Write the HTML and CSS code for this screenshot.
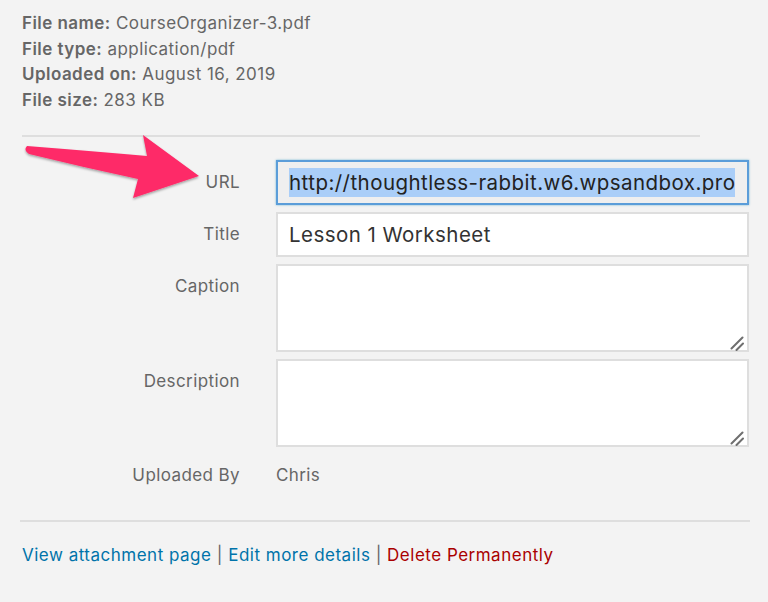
FILE: index.html
```html
<!DOCTYPE html>
<html lang="en">
<head>
<meta charset="utf-8">
<title>Attachment details</title>
<link rel="stylesheet" href="styles.css">
</head>
<body>
<div class="panel">
  <div class="meta">
    <div><strong>File name:</strong> CourseOrganizer-3.pdf</div>
    <div><strong>File type:</strong> application/pdf</div>
    <div><strong>Uploaded on:</strong> August 16, 2019</div>
    <div><strong>File size:</strong> 283 KB</div>
  </div>
  <hr class="sep sep-top">
  <div class="fields">
    <div class="label">URL</div>
    <div class="input url"><span class="sel">http://thoughtless-rabbit.w6.wpsandbox.pro</span></div>
    <div class="label">Title</div>
    <div class="input">Lesson 1 Worksheet</div>
    <div class="label">Caption</div>
    <div class="area-wrap">
      <textarea class="area"></textarea>
      <svg class="grip" width="14" height="16" viewBox="0 0 14 16" aria-hidden="true">
        <path d="M1.5,13.5 L12.5,2.5 M6.5,15 L13,8.5" stroke="#6f6f6f" stroke-width="2" stroke-linecap="round" fill="none"/>
      </svg>
    </div>
    <div class="label">Description</div>
    <div class="area-wrap">
      <textarea class="area"></textarea>
      <svg class="grip" width="14" height="16" viewBox="0 0 14 16" aria-hidden="true">
        <path d="M1.5,13.5 L12.5,2.5 M6.5,15 L13,8.5" stroke="#6f6f6f" stroke-width="2" stroke-linecap="round" fill="none"/>
      </svg>
    </div>
    <div class="label label-plain">Uploaded By</div>
    <div class="value">Chris</div>
  </div>
  <hr class="sep sep-bottom">
  <div class="actions">
    <a href="#" class="link">View attachment page</a> <span class="bar">|</span>
    <a href="#" class="link">Edit more details</a> <span class="bar">|</span>
    <a href="#" class="link delete">Delete Permanently</a>
  </div>
  <svg class="arrow" width="200" height="80" viewBox="0 0 200 80" aria-hidden="true">
    <defs>
      <filter id="sh" x="-10%" y="-10%" width="120%" height="130%">
        <feDropShadow dx="0" dy="1.5" stdDeviation="1.2" flood-color="#000" flood-opacity="0.35"/>
      </filter>
    </defs>
    <path filter="url(#sh)" fill="#fe2a68" d="M17,21 Q80,26 137,31 L133,10 L189,51 L123,73 L128,54 Q72,42 19,29 Q13,25 17,21 Z"/>
  </svg>
</div>
</body>
</html>
```

FILE: styles.css
```css
html, body {
  margin: 0;
  padding: 0;
  background: #f3f3f3;
}
body {
  font-family: Inter, "Liberation Sans", sans-serif;
  color: #666;
  width: 768px;
  height: 602px;
  overflow: hidden;
}
.panel {
  position: relative;
  padding: 11px 0 0 22px;
}
.meta {
  font-size: 17px;
  letter-spacing: 0.45px;
  line-height: 25.7px;
  color: #666;
}
.meta strong {
  font-weight: 600;
}
.sep {
  border: 0;
  height: 2px;
  background: #dedede;
  margin: 0;
}
.sep-top {
  width: 678px;
  margin-top: 21px;
}
.sep-bottom {
  width: 730px;
  margin-top: 34px;
  margin-left: -2px;
}
.fields {
  display: grid;
  grid-template-columns: 218px 473px;
  column-gap: 36px;
  row-gap: 7px;
  margin-top: 23px;
}
.label {
  text-align: right;
  font-size: 17px;
  letter-spacing: 0.4px;
  line-height: 22px;
  padding-top: 11px;
  color: #666;
}
.label-plain {
  padding-top: 10px;
}
.input {
  box-sizing: border-box;
  height: 45px;
  border: 2px solid #dedede;
  background: #fff;
  font-size: 20.5px;
  letter-spacing: 0.45px;
  line-height: 24px;
  padding: 9px 11px;
  color: #333;
  white-space: nowrap;
  overflow: hidden;
}
.url {
  background: #efefef;
  border-color: #5b9dd9;
  box-shadow: 0 0 2px rgba(30, 140, 190, 0.6);
}
.sel {
  background: #aacef8;
  color: #222;
  padding: 2px 0 2px;
}
.area-wrap {
  position: relative;
  height: 88px;
}
.area {
  box-sizing: border-box;
  display: block;
  height: 88px;
  width: 473px;
  border: 2px solid #dedede;
  background: #fff;
  margin: 0;
  padding: 8px 11px;
  font-family: inherit;
  font-size: 20px;
  resize: none;
  outline: none;
}
.grip {
  position: absolute;
  right: 5px;
  bottom: 1px;
}
.value {
  font-size: 17px;
  letter-spacing: 0.4px;
  line-height: 22px;
  padding-top: 10px;
  color: #666;
}
.actions {
  margin-top: 22px;
  font-size: 17px;
  letter-spacing: 0.5px;
  line-height: 22px;
}
.link {
  color: #0073aa;
  text-decoration: none;
}
.delete {
  color: #a00;
}
.bar {
  color: #666;
}
.arrow {
  position: absolute;
  left: 10px;
  top: 125px;
}
```
